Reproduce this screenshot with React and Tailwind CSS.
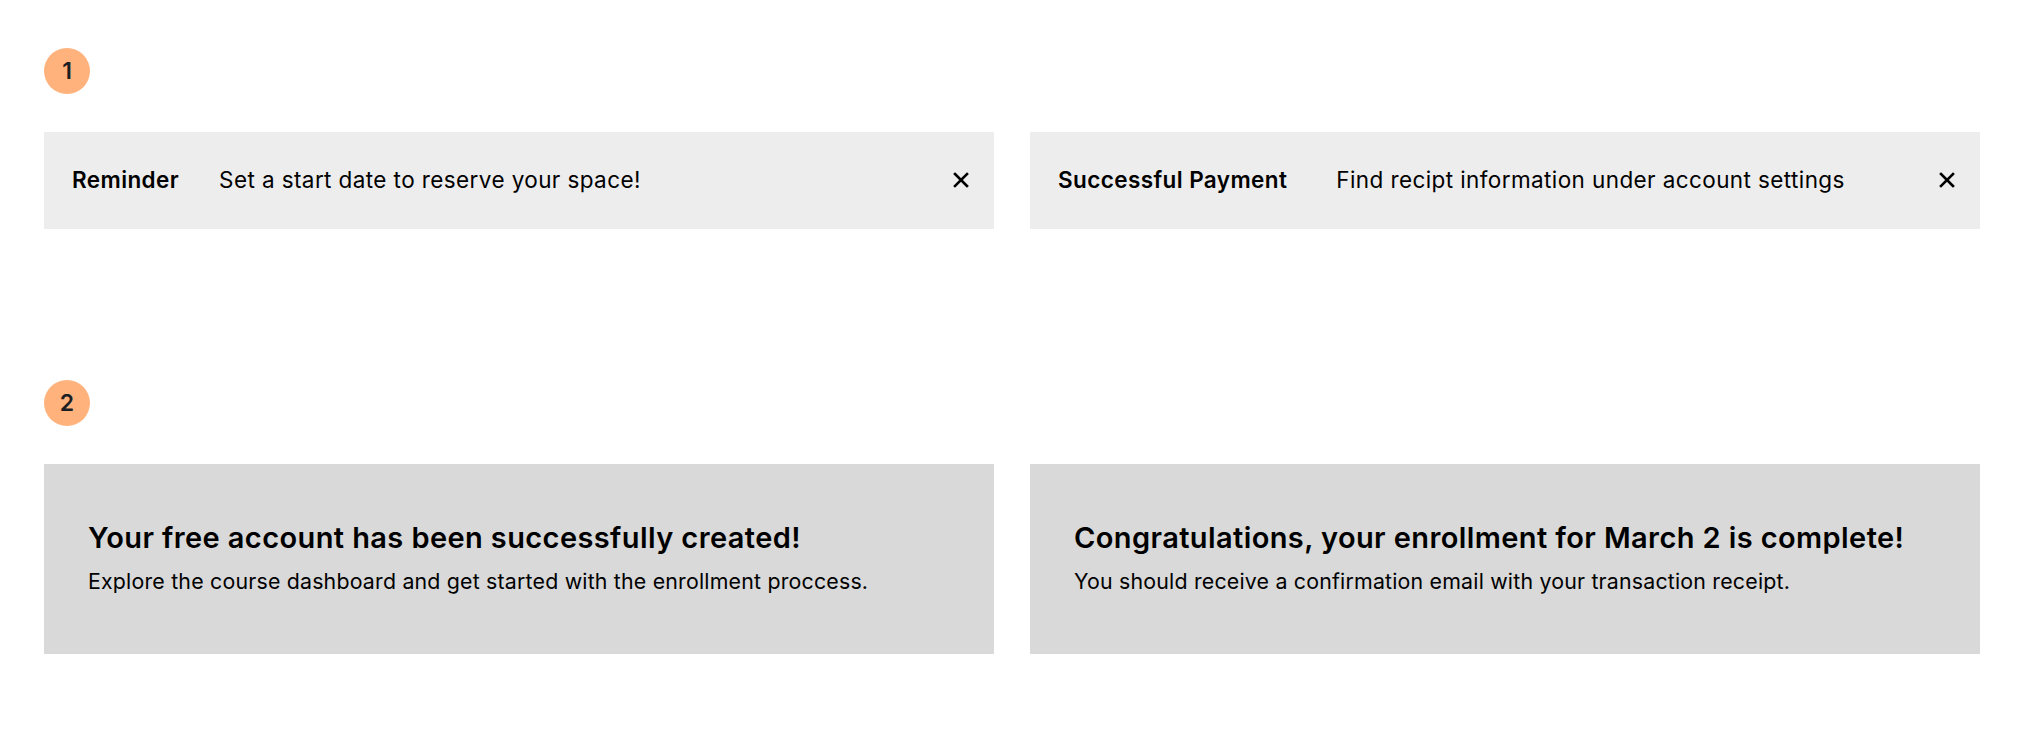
import React from 'react';

const Badge = ({ n }) => (
  <div className="w-[46px] h-[46px] rounded-full bg-[#FFB27C] flex items-center justify-center text-[23px] font-semibold text-[#1b1f23]">
    {n}
  </div>
);

const CloseIcon = () => (
  <svg width="16" height="16" viewBox="0 0 16 16" fill="none" stroke="#000" strokeWidth="2.6" strokeLinecap="square">
    <path d="M2 2 L14 14 M14 2 L2 14" />
  </svg>
);

const Banner = ({ label, text, gap }) => (
  <div className="h-[97px] bg-[#EDEDED] flex items-center pl-[28px] pr-[25px] pb-[2px] text-[22.5px] tracking-[0.4px] text-black">
    <span className="font-semibold">{label}</span>
    <span className={gap}>{text}</span>
    <button className="ml-auto flex items-center">
      <CloseIcon />
    </button>
  </div>
);

const Card = ({ title, text }) => (
  <div className="h-[190px] bg-[#D9D9D9] flex flex-col justify-center pl-[44px] pr-[30px] pb-[4px] text-black">
    <h2 className="text-[29px] font-semibold leading-[36px] tracking-[0.4px]">{title}</h2>
    <p className="text-[21.33px] leading-[28px] tracking-[0.2px] mt-[11px]">{text}</p>
  </div>
);

export default function App() {
  return (
    <div className="min-h-screen bg-white pl-[44px] pr-[38px] pt-[48px] pb-[84px]" style={{ fontFamily: 'Inter, "Noto Sans", sans-serif' }}>
      <section>
        <Badge n="1" />
        <div className="grid grid-cols-2 gap-[36px] mt-[38px]">
          <Banner label="Reminder" text="Set a start date to reserve your space!" gap="ml-[40px]" />
          <Banner label="Successful Payment" text="Find recipt information under account settings" gap="ml-[49px]" />
        </div>
      </section>

      <section className="mt-[151px]">
        <Badge n="2" />
        <div className="grid grid-cols-2 gap-[36px] mt-[38px]">
          <Card
            title="Your free account has been successfully created!"
            text="Explore the course dashboard and get started with the enrollment proccess."
          />
          <Card
            title="Congratulations, your enrollment for March 2 is complete!"
            text="You should receive a confirmation email with your transaction receipt."
          />
        </div>
      </section>
    </div>
  );
}
